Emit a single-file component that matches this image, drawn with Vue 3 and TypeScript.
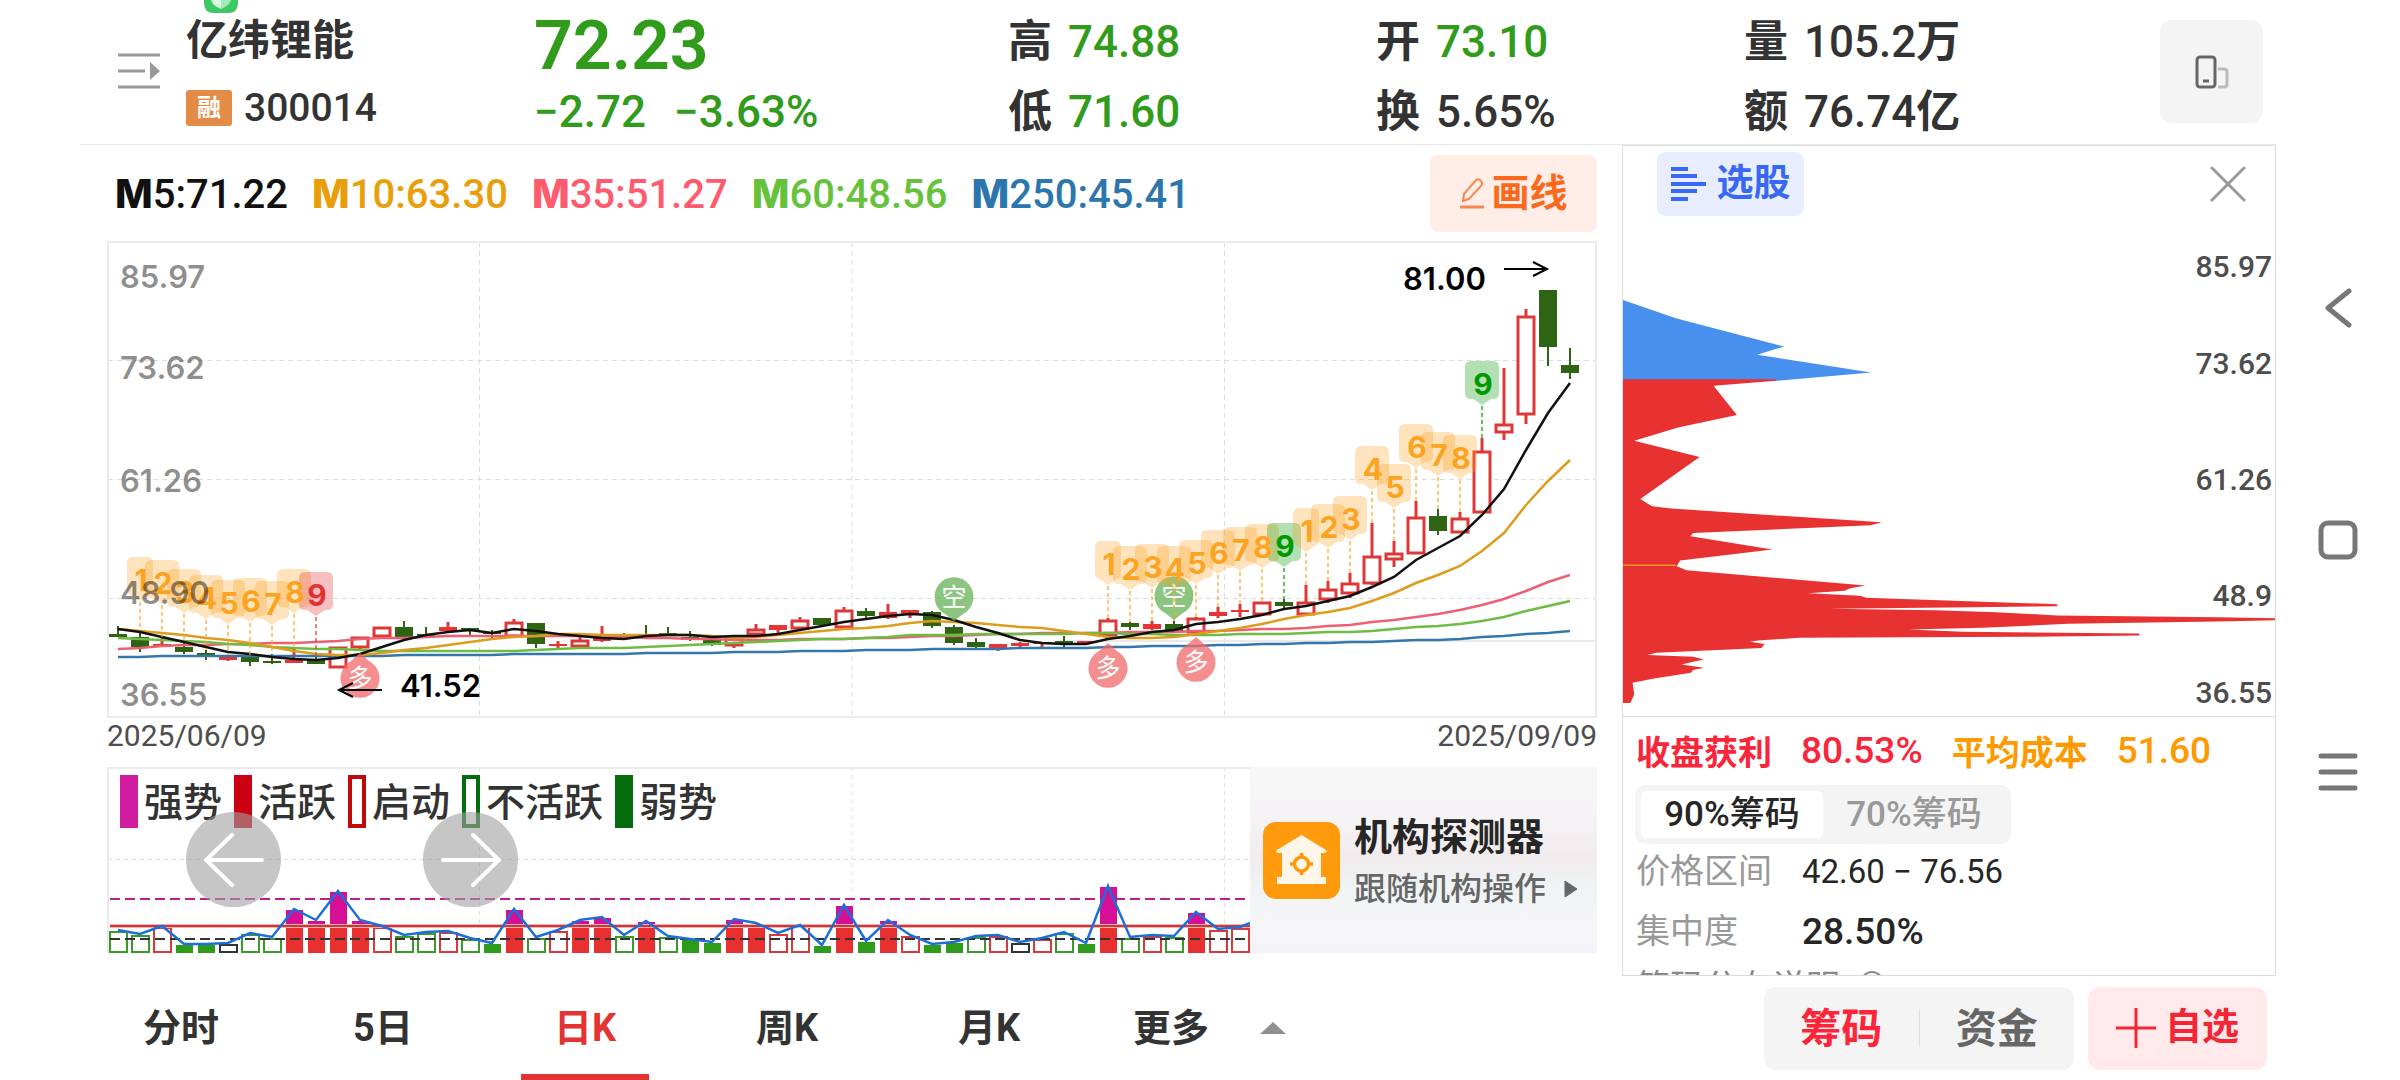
<script setup lang="ts">
import { ref } from 'vue'

type Candle = [kind: 'h' | 'r' | 'g', top: number, bottom: number, high?: number, low?: number]
type BarKind = 'gh' | 'rh' | 'kh' | 'gs' | 'rs'

const STEP = 22
const FIRST = 118
const cx = (i: number): number => FIRST + i * STEP

const averages = [
  { name: '5', value: '71.22', color: '#111111' },
  { name: '10', value: '63.30', color: '#e99f0c' },
  { name: '35', value: '51.27', color: '#ff5a6e' },
  { name: '60', value: '48.56', color: '#66c23a' },
  { name: '250', value: '45.41', color: '#2c76ae' },
]

const quotes = [
  [
    { label: '高', value: '74.88', unit: '', green: true },
    { label: '低', value: '71.60', unit: '', green: true },
  ],
  [
    { label: '开', value: '73.10', unit: '', green: true },
    { label: '换', value: '5.65%', unit: '', green: false },
  ],
  [
    { label: '量', value: '105.2', unit: '万', green: false },
    { label: '额', value: '76.74', unit: '亿', green: false },
  ],
]

// h = hollow rising, r = thin rising, g = falling
const candles: Candle[] = [
  ['g', 634, 637, 626, 637], ['g', 637, 647, 630, 652], ['r', 644, 647, 637, 647], ['g', 647, 652, 640, 654],
  ['g', 653, 655, 650, 660], ['r', 657, 660, 655, 661], ['g', 657, 662, 655, 666], ['g', 661, 663, 654, 664],
  ['r', 660, 663, 648, 663], ['g', 660, 664, 655, 664], ['h', 647, 668], ['h', 637, 648, 637, 649],
  ['h', 627, 637], ['g', 627, 637, 621, 637], ['g', 634, 636, 627, 636], ['r', 627, 631, 622, 633],
  ['g', 628, 630, 628, 637], ['g', 632, 634, 630, 638], ['h', 622, 637, 619, 638], ['g', 623, 644, 623, 648],
  ['r', 644, 646, 641, 648], ['h', 640, 647, 637, 647], ['r', 637, 641, 626, 642], ['g', 634, 637, 633, 637],
  ['g', 634, 636, 625, 636], ['g', 633, 635, 627, 636], ['g', 637, 640, 631, 641], ['g', 640, 645, 638, 646],
  ['h', 636, 646, 636, 648], ['h', 629, 635, 624, 635], ['r', 625, 630, 625, 633], ['h', 620, 629, 617, 629],
  ['g', 618, 625, 618, 627], ['h', 610, 628, 607, 628], ['g', 611, 616, 608, 618], ['r', 612, 618, 604, 619],
  ['r', 610, 614, 610, 618], ['g', 612, 626, 611, 628], ['g', 627, 643, 625, 645], ['g', 642, 647, 638, 648],
  ['r', 644, 648, 644, 651], ['r', 643, 646, 642, 647], ['r', 642, 644, 642, 647], ['g', 641, 643, 636, 648],
  ['r', 641, 643, 641, 643], ['h', 620, 636, 618, 636], ['g', 623, 627, 622, 630], ['r', 624, 629, 621, 630],
  ['g', 624, 631, 621, 633], ['h', 618, 633, 617, 633], ['r', 612, 616, 607, 618], ['r', 610, 612, 604, 617],
  ['h', 602, 615], ['g', 602, 606, 599, 608], ['h', 602, 615, 585, 615], ['h', 589, 600, 581, 603],
  ['h', 583, 594, 573, 598], ['h', 556, 584, 523, 585], ['h', 553, 560, 541, 567], ['h', 517, 554, 501, 554],
  ['g', 516, 531, 509, 535], ['h', 518, 533, 512, 533], ['h', 451, 513, 438, 513], ['h', 424, 433, 368, 440],
  ['h', 316, 415, 309, 424], ['g', 290, 347, 290, 366], ['g', 365, 373, 348, 379],
]

const lines = [
  {
    color: '#3677ab',
    ys: [657, 657, 656, 656, 656, 656, 656, 656, 656, 656, 656, 656, 656, 655, 655, 655, 655, 655, 654, 654, 654, 654,
      654, 654, 653, 653, 653, 653, 652, 652, 652, 651, 651, 651, 650, 650, 650, 649, 649, 649, 649, 648, 648, 648, 648,
      647, 647, 646, 646, 646, 645, 645, 644, 644, 643, 643, 642, 642, 641, 640, 640, 639, 637, 636, 634, 633, 631],
  },
  {
    color: '#ee5f74',
    ys: [649, 648, 646, 645, 645, 644, 644, 643, 643, 642, 641, 639, 638, 638, 637, 636, 636, 636, 636, 636, 636, 636,
      637, 637, 638, 638, 639, 639, 640, 640, 640, 639, 639, 639, 638, 638, 637, 636, 636, 635, 634, 634, 633, 633, 633,
      633, 632, 632, 632, 631, 631, 630, 629, 629, 628, 626, 625, 622, 620, 617, 614, 610, 605, 599, 591, 582, 575],
  },
  {
    color: '#6dbd45',
    ys: [638, 639, 640, 641, 642, 644, 645, 647, 648, 649, 649, 650, 651, 651, 651, 651, 651, 651, 651, 650, 649, 648,
      648, 648, 647, 646, 645, 644, 643, 642, 641, 640, 639, 639, 638, 637, 635, 635, 635, 634, 634, 634, 634, 634, 633,
      633, 634, 634, 635, 635, 635, 634, 634, 634, 633, 632, 632, 631, 629, 627, 626, 624, 621, 617, 611, 606, 601],
  },
  {
    color: '#de9c1d',
    ys: [629, 631, 633, 635, 638, 640, 643, 647, 651, 654, 655, 655, 653, 650, 648, 645, 642, 639, 637, 636, 634, 634,
      635, 635, 635, 635, 635, 636, 638, 637, 635, 633, 631, 629, 628, 626, 623, 621, 622, 623, 625, 627, 628, 631, 634,
      637, 638, 638, 637, 634, 631, 628, 624, 619, 615, 612, 608, 601, 593, 583, 575, 566, 551, 533, 505, 481, 460],
  },
  {
    color: '#111111',
    ys: [629, 632, 637, 642, 647, 652, 654, 657, 659, 660, 658, 654, 647, 640, 635, 632, 630, 633, 629, 631, 634, 636,
      638, 639, 636, 635, 635, 637, 636, 636, 634, 630, 626, 622, 619, 616, 614, 615, 620, 627, 633, 640, 643, 644, 644,
      639, 636, 632, 630, 624, 622, 619, 615, 609, 606, 601, 596, 587, 577, 560, 548, 536, 515, 489, 450, 413, 383],
  },
]
const points = (ys: number[]): string => ys.map((y, i) => `${cx(i)},${y}`).join(' ')

const tdColors = { orange: '#fca321', red: '#e33030', green: '#009900' }
type TdTone = keyof typeof tdColors
const td: { i: number; n: number; y: number; tone: TdTone }[] = [
  ...[557, 560, 569, 575, 580, 578, 581, 569, 572].map((y, k) => ({ i: k + 1, n: k + 1, y, tone: (k === 8 ? 'red' : 'orange') as TdTone })),
  ...[541, 546, 544, 546, 540, 530, 527, 524, 523].map((y, k) => ({ i: k + 45, n: k + 1, y, tone: (k === 8 ? 'green' : 'orange') as TdTone })),
  ...[508, 504, 496, 446, 464, 424, 432, 435, 361].map((y, k) => ({ i: k + 54, n: k + 1, y, tone: (k === 8 ? 'green' : 'orange') as TdTone })),
]
const half = (n: number): number => (n === 1 ? 13 : 17)
const bubble = (n: number, x: number, y: number): string => {
  const w = half(n)
  return `M${x - w + 6} ${y}H${x + w - 6}q6 0 6 6V${y + 32}q0 6 -6 6H${x + 9}L${x} ${y + 44}L${x - 9} ${y + 38}H${x - w + 6}q-6 0 -6 -6V${y + 6}q0 -6 6 -6z`
}

const pins = [
  { x: 360, y: 678, text: '多', up: true },
  { x: 1108, y: 668, text: '多', up: true },
  { x: 1196, y: 662, text: '多', up: true },
  { x: 954, y: 597, text: '空', up: false },
  { x: 1174, y: 596, text: '空', up: false },
]

const axis = [
  { y: 288, text: '85.97' },
  { y: 379, text: '73.62' },
  { y: 492, text: '61.26' },
  { y: 604, text: '48.90' },
  { y: 706, text: '36.55' },
]

const legend = [
  { text: '强势', fill: '#cf1c9e', edge: '#cf1c9e' },
  { text: '活跃', fill: '#cb0013', edge: '#cb0013' },
  { text: '启动', fill: '#ffffff', edge: '#c00a0a' },
  { text: '不活跃', fill: '#ffffff', edge: '#046c0c' },
  { text: '弱势', fill: '#046c0c', edge: '#046c0c' },
]

const bars: [BarKind, number][] = [
  ['gh', 931], ['gh', 935], ['rh', 927], ['gs', 945], ['gs', 945], ['kh', 944], ['gh', 934], ['gh', 938], ['rs', 910],
  ['rs', 921], ['rs', 892], ['rs', 921], ['rh', 927], ['gh', 936], ['gh', 933], ['rh', 932], ['gh', 939], ['gs', 944],
  ['rs', 910], ['gh', 938], ['rh', 931], ['rs', 921], ['rs', 918], ['gh', 936], ['rs', 922], ['gh', 937], ['gs', 940],
  ['gs', 943], ['rs', 920], ['rs', 924], ['rh', 934], ['rh', 926], ['gs', 946], ['rs', 906], ['gs', 942], ['rs', 921],
  ['rh', 936], ['gs', 945], ['gs', 943], ['gh', 937], ['rh', 936], ['kh', 943], ['rh', 939], ['gh', 933], ['gs', 944],
  ['rs', 887], ['gh', 938], ['rh', 936], ['gh', 937], ['rs', 913], ['rh', 930], ['rh', 928],
]
const edge = { gh: '#3a9a2a', rh: '#d83a3a', kh: '#333333', gs: '#2f9b1b', rs: '#e83030' }
const barLine = bars.map(([, y], i) => `${cx(i)},${y - 1}`).join(' ') + ' 1250,923'

const chips = ['85.97', '73.62', '61.26', '48.9', '36.55']

const range = ref(0)
const pane = ref(0)
const tab = ref(2)
const tabs = ['分时', '5日', '日K', '周K', '月K']
</script>

<template>
  <div class="app">
    <div class="stock">
      <header class="head">
        <button class="plain list" aria-label="列表">
          <svg width="42" height="36" viewBox="0 0 42 36" fill="none" stroke="#999" stroke-width="3">
            <path d="M0 2H42M0 18H27M0 34H42" />
            <path d="M32 9L42 18L32 27z" fill="#999" stroke="none" />
          </svg>
        </button>
        <div class="ident">
          <svg class="shield" width="34" height="13" viewBox="0 0 34 13">
            <path d="M0 0H34V3Q34 13 24 13H10Q0 13 0 3z" fill="#3cc964" />
            <path d="M7 0H17V9Q9 6 7 0z" fill="#d9f8e2" />
            <path d="M17 0H27Q25 6 17 9z" fill="#a5e8b9" />
          </svg>
          <h1>亿纬锂能</h1>
          <div class="code"><span class="badge">融</span>300014</div>
        </div>
        <div class="price">
          <strong>72.23</strong>
          <div class="delta"><span>−2.72</span><span>−3.63%</span></div>
        </div>
        <dl v-for="(col, c) in quotes" :key="c" class="quote">
          <div v-for="q in col" :key="q.label">
            <dt>{{ q.label }}</dt>
            <dd :class="{ green: q.green }">{{ q.value }}<b v-if="q.unit">{{ q.unit }}</b></dd>
          </div>
        </dl>
        <button class="rotate" aria-label="竖屏">
          <svg width="34" height="34" viewBox="0 0 34 34" fill="none">
            <rect x="2" y="2" width="18" height="30" rx="3" stroke="#666" stroke-width="3" />
            <path d="M8 26H14" stroke="#666" stroke-width="3" />
            <path d="M23 14H29Q32 14 32 17V29Q32 32 29 32H23" stroke="#bbb" stroke-width="3" />
          </svg>
        </button>
      </header>

      <div class="body">
        <main class="left">
          <div class="ma-row">
            <span v-for="m in averages" :key="m.name" :style="{ color: m.color }"><b>M</b>{{ m.name }}:{{ m.value }}</span>
            <button class="draw">
              <svg width="26" height="31" viewBox="0 0 26 31" fill="none" stroke="#f9864d" stroke-width="2">
                <path d="M4 23L5 16L17 2Q20 0 22 3Q24 5 22 8L10 21z" />
                <path d="M1 29H25" stroke-width="3" />
              </svg>画线
            </button>
          </div>

          <svg class="chart" viewBox="107 241 1490 477" font-family="Inter, 'Noto Sans CJK SC', sans-serif">
            <g stroke="#dddddd" stroke-dasharray="5 4">
              <path d="M108 360.5H1596M108 479.5H1596M108 598.5H1596M479.500 242V717M852 242V717M1224.500 242V717" />
            </g>
            <path d="M1060 641H1596" stroke="#e9e9e9" stroke-width="2" />
            <rect x="108" y="242" width="1488" height="475" fill="none" stroke="#ebebeb" stroke-width="2" />
            <g v-for="(c, i) in candles" :key="'c' + i" :stroke="c[0] === 'g' ? '#2f6414' : '#dc3838'">
              <template v-if="c[0] === 'h'">
                <path :d="`M${cx(i)} ${c[3] ?? c[1]}V${c[1]}M${cx(i)} ${c[2]}V${c[4] ?? c[2]}`" stroke-width="3" />
                <rect :x="cx(i) - 8" :y="c[1] + 1" width="16" :height="c[2] - c[1] - 2" fill="#fff" stroke-width="3" />
              </template>
              <template v-else>
                <path :d="`M${cx(i)} ${c[3]}V${c[4]}`" :stroke-width="c[0] === 'g' ? 2 : 3" />
                <rect :x="cx(i) - 9" :y="c[1]" width="18" :height="c[2] - c[1]" :fill="c[0] === 'g' ? '#2f6414' : '#e83434'" stroke="none" />
              </template>
            </g>
            <polyline v-for="l in lines" :key="l.color" :points="points(l.ys)" :stroke="l.color" fill="none" stroke-width="2.500" />

            <g v-for="p in pins" :key="p.x">
              <g :fill="p.up ? '#f26a6a' : '#66b255'" opacity="0.75">
                <path v-if="p.up" :d="`M${p.x - 9} ${p.y - 17}L${p.x} ${p.y - 25}L${p.x + 9} ${p.y - 17}A19.500 19.500 0 1 1 ${p.x - 9} ${p.y - 17}z`" />
                <path v-else :d="`M${p.x - 9} ${p.y + 17}L${p.x} ${p.y + 24}L${p.x + 9} ${p.y + 17}A19.500 19.500 0 1 0 ${p.x - 9} ${p.y + 17}z`" />
              </g>
              <text :x="p.x" :y="p.y + 9" text-anchor="middle" font-size="25" fill="#fff">{{ p.text }}</text>
            </g>

            <g v-for="(t, k) in td" :key="'t' + k">
              <path :d="bubble(t.n, cx(t.i), t.y)" :fill="tdColors[t.tone]" opacity="0.3" />
              <path :d="`M${cx(t.i)} ${t.y + 45}V${candles[t.i][3] ?? candles[t.i][1]}`" :stroke="tdColors[t.tone]" stroke-width="2" stroke-dasharray="4 3" opacity="0.6" />
            </g>
            <text v-for="(t, k) in td" :key="'n' + k" :x="cx(t.i) + 1" :y="t.y + 34" text-anchor="middle" font-size="30" font-weight="700" :fill="tdColors[t.tone]">{{ t.n }}</text>

            <g font-size="31" font-weight="600">
              <text v-for="a in axis" :key="a.text" x="120" :y="a.y" fill="#000" fill-opacity="0.45">{{ a.text }}</text>
              <text x="400" y="697">41.52</text>
              <text x="1403" y="290">81.00</text>
            </g>
            <path d="M382 690H339M353 683L339 690L353 697M1504 269H1547M1533 262L1547 269L1533 276" fill="none" stroke="#000" stroke-width="2" />
          </svg>
          <div class="dates"><span>2025/06/09</span><span>2025/09/09</span></div>

          <div class="sub">
            <div class="sub-chart">
              <svg viewBox="107 767 1143 186">
                <path d="M108 859.500H1250M479.500 767V924M852 767V924M1224.500 767V924" stroke="#dddddd" stroke-dasharray="4 4" />
                <path d="M108 953V768H1250" fill="none" stroke="#ebebeb" stroke-width="2" />
                <g v-for="([kind, y], i) in bars" :key="i">
                  <template v-if="kind === 'rs'">
                    <rect :x="cx(i) - 8" :y="y" width="17" :height="953 - y" fill="#e83030" />
                    <rect :x="cx(i) - 8" :y="y" width="17" :height="Math.max(0, 926 - y)" fill="#d60f96" />
                  </template>
                  <rect v-else-if="kind === 'gs'" :x="cx(i) - 8" :y="y" width="17" :height="953 - y" fill="#2f9b1b" />
                  <rect v-else :x="cx(i) - 8" :y="y + 1" width="17" :height="951 - y" fill="none" :stroke="edge[kind]" stroke-width="2" />
                </g>
                <path d="M110 899H1250" stroke="#c01c92" stroke-width="2" stroke-dasharray="10 5" />
                <path d="M110 926H1250" stroke="#f6b0b0" stroke-width="4" />
                <path d="M110 926H1250" stroke="#c83a3a" stroke-width="2" />
                <path d="M110 939H1250" stroke="#333" stroke-width="2" stroke-dasharray="10 5" />
                <polyline :points="barLine" fill="none" stroke="#1a6fd8" stroke-width="2.500" />
              </svg>
              <ul class="legend">
                <li v-for="l in legend" :key="l.text"><i :style="{ background: l.fill, borderColor: l.edge }"></i>{{ l.text }}</li>
              </ul>
              <button class="pan back" aria-label="向左">
                <svg width="60" height="60" viewBox="0 0 60 60" fill="none" stroke="#fff" stroke-width="4" stroke-linecap="round"><path d="M58 30H2M28 5L2 30L28 55" /></svg>
              </button>
              <button class="pan next" aria-label="向右">
                <svg width="60" height="60" viewBox="0 0 60 60" fill="none" stroke="#fff" stroke-width="4" stroke-linecap="round"><path d="M2 30H58M32 5L58 30L32 55" /></svg>
              </button>
            </div>
            <a class="banner" href="#">
              <svg width="77" height="77" viewBox="0 0 77 77">
                <rect width="77" height="77" rx="13" fill="#ff9a0c" />
                <path d="M38.500 13L63 28Q65 31 60 31H58V55H63V62H14V55H19V31H16Q12 31 14 28z" fill="#fff6ea" />
                <circle cx="38.500" cy="42" r="7" fill="none" stroke="#ff9a0c" stroke-width="3.500" />
                <path d="M38.500 31V36M38.500 48V53M27 42H32M45 42H50" stroke="#ff9a0c" stroke-width="3.500" />
              </svg>
              <span class="banner-text">
                <strong>机构探测器</strong>
                <span>跟随机构操作<svg width="14" height="18" viewBox="0 0 14 18"><path d="M1 1L13 9L1 17z" fill="#666" stroke="#666" stroke-linejoin="round" /></svg></span>
              </span>
            </a>
          </div>
        </main>

        <section class="panel">
          <div class="panel-head">
            <button class="pick">
              <svg width="35" height="36" viewBox="0 0 35 36" stroke="#3868f4" stroke-width="4"><path d="M0 3H17M0 10H26M0 18H35M0 25H26M0 33H17" /></svg>选股
            </button>
            <button class="plain" aria-label="关闭">
              <svg width="36" height="36" viewBox="0 0 36 36" stroke="#999" stroke-width="3" stroke-linecap="round"><path d="M2 2L34 34M34 2L2 34" /></svg>
            </button>
          </div>
          <div class="dist">
            <svg viewBox="28 0 1506 1430" preserveAspectRatio="none">
              <path d="M28 180L150 235L400 320L338 345L601 398L385 423L28 423z" fill="#4890ed" />
              <path d="M28 418H382V423L237 438L291 526L155 563L54 603L205 652L68 778L95 800L140 807L625 848L600 857L190 880L184 890L373 930L160 963L152 980L175 992L588 1038L553 1046L540 1054L455 1061L575 1069L590 1075L1031 1094V1100L835 1103L505 1108L750 1112L890 1118L1030 1128L1402 1133L1534 1136V1142L1435 1145L1055 1153L860 1165L688 1170L812 1177L1221 1182V1188L957 1192L435 1195L340 1203L322 1207L355 1214L348 1226L262 1231L105 1240L85 1247L190 1252L215 1260L190 1267L163 1275L215 1285L190 1292L185 1300L100 1317L50 1330L54 1365L45 1391H28z" fill="#e83131" />
              <path d="M28 977H150" stroke="#f09a20" stroke-width="4" />
            </svg>
            <span v-for="c in chips" :key="c">{{ c }}</span>
          </div>
          <div class="info">
            <div class="gain"><b class="red">收盘获利</b><span class="red">80.53%</span><b class="amber">平均成本</b><span class="amber">51.60</span></div>
            <div class="seg">
              <button v-for="(s, i) in ['90%筹码', '70%筹码']" :key="s" :class="{ on: range === i }" @click="range = i">{{ s }}</button>
            </div>
            <dl class="facts">
              <div><dt>价格区间</dt><dd>42.60 − 76.56</dd></div>
              <div><dt>集中度</dt><dd class="strong">28.50%</dd></div>
            </dl>
            <div class="more">筹码分布说明<i></i></div>
          </div>
        </section>
      </div>

      <footer class="foot">
        <nav class="tabs">
          <button v-for="(t, i) in tabs" :key="t" :class="{ on: tab === i }" @click="tab = i">{{ t }}</button>
          <button class="extra">更多<svg width="26" height="12" viewBox="0 0 26 12"><path d="M0 12L13 0L26 12z" fill="#909090" /></svg></button>
        </nav>
        <div class="actions">
          <div class="pair">
            <button v-for="(p, i) in ['筹码', '资金']" :key="p" :class="{ on: pane === i }" @click="pane = i">{{ p }}</button>
          </div>
          <button class="add">
            <svg width="40" height="40" viewBox="0 0 40 40" stroke="#f32636" stroke-width="3"><path d="M0 20H40M20 0V40" /></svg>自选
          </button>
        </div>
      </footer>
    </div>

    <aside class="system">
      <button class="plain" aria-label="返回">
        <svg width="40" height="40" viewBox="0 0 40 40" fill="none" stroke="#777" stroke-width="5" stroke-linecap="round" stroke-linejoin="round"><path d="M31 3L10 20L31 37" /></svg>
      </button>
      <button class="plain" aria-label="主页">
        <svg width="40" height="40" viewBox="0 0 40 40" fill="none" stroke="#777" stroke-width="5"><rect x="3" y="3" width="34" height="34" rx="7" /></svg>
      </button>
      <button class="plain" aria-label="任务">
        <svg width="40" height="40" viewBox="0 0 40 40" stroke="#777" stroke-width="5" stroke-linecap="round"><path d="M3 4H37M3 20H37M3 36H37" /></svg>
      </button>
    </aside>
  </div>
</template>

<style>
body {
  margin: 0;
  background: #fff;
}
</style>

<style scoped>
.app {
  display: flex;
  min-height: 100vh;
  padding-left: 80px;
  box-sizing: border-box;
  background: #fff;
  color: #333;
  font-family: Roboto, 'Noto Sans CJK SC', sans-serif;
}
svg {
  display: block;
}
button {
  padding: 0;
  border: 0;
  background: none;
  color: inherit;
  font: inherit;
  cursor: pointer;
}
dl,
dd,
h1,
ul {
  margin: 0;
  padding: 0;
}
.stock {
  flex: 1;
  min-width: 0;
  display: flex;
  flex-direction: column;
}

.head {
  display: grid;
  grid-template-columns: 106px 348fr 474fr 368fr 368fr 416fr 103px;
  height: 144px;
  padding-right: 13px;
  border-bottom: 1px solid #e8e8e8;
}
.list {
  padding: 53px 0 0 38px;
  align-self: start;
}
.ident {
  position: relative;
  padding-top: 10px;
}
.shield {
  position: absolute;
  left: 18px;
  top: 0;
}
.ident h1 {
  font-size: 42px;
  line-height: 62px;
  font-weight: 700;
}
.code {
  display: flex;
  align-items: center;
  gap: 12px;
  height: 72px;
  font-size: 39px;
  font-weight: 500;
}
.badge {
  width: 46px;
  height: 36px;
  border-radius: 3px;
  background: #e38b47;
  color: #fff;
  font-size: 24px;
  line-height: 36px;
  font-weight: 700;
  text-align: center;
}
.price {
  color: #319b1c;
  font-weight: 500;
}
.price strong {
  display: block;
  padding-top: 6px;
  font-size: 68px;
  line-height: 80px;
  font-weight: 600;
}
.delta {
  display: flex;
  gap: 28px;
  font-size: 44px;
  line-height: 52px;
}
.quote {
  padding-top: 7px;
}
.quote div {
  display: flex;
  gap: 16px;
  height: 70px;
  align-items: center;
}
.quote dt {
  font-size: 44px;
  line-height: 70px;
  font-weight: 700;
}
.quote dd {
  font-size: 44px;
  line-height: 70px;
  font-weight: 500;
}
.green {
  color: #319b1c;
}
.rotate {
  display: flex;
  align-items: center;
  justify-content: center;
  width: 103px;
  height: 103px;
  margin-top: 20px;
  border-radius: 12px;
  background: #f4f4f4;
}

.body {
  display: grid;
  grid-template-columns: 1542fr 654fr;
}
.left {
  min-width: 0;
  padding: 0 25px 23px 27px;
}
.ma-row {
  display: flex;
  align-items: center;
  gap: 24px;
  height: 96px;
  padding-left: 8px;
  font-size: 40px;
  font-weight: 500;
}
.ma-row b {
  font-family: Inter, sans-serif;
  font-weight: 800;
}
.draw {
  display: flex;
  align-items: center;
  justify-content: center;
  gap: 6px;
  width: 167px;
  height: 77px;
  margin-left: auto;
  border-radius: 8px;
  background: #ffeee7;
  color: #f96a1f;
  font-size: 38px;
  line-height: 44px;
  font-weight: 700;
}
.chart,
.sub-chart > svg,
.dist svg {
  width: 100%;
}
.dates {
  display: flex;
  justify-content: space-between;
  padding-bottom: 13px;
  color: #4d4d4d;
  font-size: 30px;
  line-height: 36px;
}
.sub {
  display: flex;
}
.sub-chart {
  position: relative;
  flex: 1;
  min-width: 0;
}
.legend {
  position: absolute;
  left: 13px;
  top: 8px;
  display: flex;
  gap: 12px;
  list-style: none;
  font-size: 39px;
  line-height: 57px;
  font-weight: 500;
}
.legend li {
  display: flex;
  gap: 6px;
}
.legend i {
  box-sizing: border-box;
  width: 18px;
  height: 53px;
  border: 4px solid;
}
.pan {
  position: absolute;
  top: 45px;
  display: flex;
  align-items: center;
  justify-content: center;
  width: 95px;
  height: 95px;
  border-radius: 50%;
  background: rgba(160, 160, 160, 0.6);
}
.back {
  left: 79px;
}
.next {
  left: 316px;
}
.banner {
  display: flex;
  align-items: center;
  gap: 14px;
  box-sizing: border-box;
  width: 347px;
  padding-left: 13px;
  background: linear-gradient(#f6f7f7, #f5f2f5 30%, #f1ebed 48%, #eff3f4 64%, #f5f5f8 82%, #f5f3f7);
  color: #666;
  text-decoration: none;
}
.banner-text {
  display: flex;
  flex-direction: column;
  padding-top: 6px;
  font-size: 32px;
  line-height: 52px;
  font-weight: 500;
}
.banner-text strong {
  color: #262626;
  font-size: 38px;
  font-weight: 700;
}
.banner-text span {
  display: flex;
  align-items: center;
  gap: 18px;
}

.panel {
  border: 1px solid #dcdcdc;
  min-width: 0;
}
.panel-head {
  display: flex;
  justify-content: space-between;
  align-items: center;
  height: 64px;
  padding: 6px 29px 24px 34px;
}
.pick {
  display: flex;
  align-items: center;
  justify-content: center;
  gap: 11px;
  width: 147px;
  height: 64px;
  border-radius: 8px;
  background: #e8eeff;
  color: #3868f4;
  font-size: 37px;
  line-height: 44px;
  font-weight: 700;
}
.dist {
  position: relative;
  display: grid;
  grid-template-rows: 97px 116px 116px 97px 36px;
  justify-items: end;
  box-sizing: border-box;
  height: 477px;
  padding: 9px 3px 0;
  border-bottom: 1px solid #dcdcdc;
  color: #4d4d4d;
  font-size: 30px;
  line-height: 36px;
  font-weight: 500;
}
.dist svg {
  position: absolute;
  left: 0;
  top: 0;
  height: 100%;
}
.info {
  padding: 8px 12px 0 13px;
  font-size: 34px;
}
.gain {
  display: flex;
  align-items: center;
  gap: 29px;
  height: 50px;
  font-weight: 500;
}
.gain span {
  font-size: 37px;
}
.red {
  color: #f9253a;
}
.amber {
  color: #ff9900;
}
.seg {
  display: flex;
  box-sizing: border-box;
  width: 376px;
  height: 59px;
  margin: 10px 0 0 -1px;
  padding: 6px;
  border-radius: 10px;
  background: #f4f4f4;
}
.seg button {
  flex: 1;
  border-radius: 6px;
  color: #999;
  font-size: 35px;
  line-height: 47px;
  font-weight: 500;
}
.seg .on {
  background: #fff;
  color: #262626;
}
.facts {
  margin-top: -3px;
}
.facts div {
  display: flex;
  height: 60px;
  align-items: center;
}
.facts dt {
  width: 166px;
  color: #999;
  line-height: 40px;
}
.facts dd {
  color: #262626;
  font-size: 33px;
}
.facts .strong {
  font-weight: 500;
  font-size: 37px;
}
.more {
  display: flex;
  box-sizing: border-box;
  height: 14px;
  padding-top: 4px;
  overflow: hidden;
  color: #888;
  line-height: 44px;
}
.more i {
  box-sizing: border-box;
  width: 24px;
  height: 24px;
  margin: 6px 0 0 20px;
  border: 2px solid #888;
  border-radius: 50%;
}

.foot {
  display: flex;
  justify-content: space-between;
  flex: 1;
  min-height: 103px;
  padding-right: 9px;
}
.tabs {
  display: flex;
  font-size: 38px;
  line-height: 44px;
  font-weight: 700;
}
.tabs button {
  position: relative;
  width: 202px;
}
.tabs .on {
  color: #e33333;
}
.tabs .on::after {
  content: '';
  position: absolute;
  left: 37px;
  right: 37px;
  bottom: 0;
  height: 6px;
  background: #e33333;
}
.tabs .extra {
  display: flex;
  align-items: center;
  gap: 51px;
  padding-left: 43px;
}
.actions {
  display: flex;
  align-items: center;
  gap: 14px;
}
.pair {
  display: flex;
  align-items: center;
  width: 310px;
  height: 83px;
  border-radius: 12px;
  background: #f4f4f4;
  color: #666;
  font-size: 41px;
  font-weight: 700;
}
.pair button {
  flex: 1;
  height: 38px;
  line-height: 40px;
}
.pair button + button {
  border-left: 1px solid #ddd;
}
.pair .on {
  color: #ff2438;
}
.add {
  display: flex;
  align-items: center;
  justify-content: center;
  gap: 9px;
  width: 179px;
  height: 83px;
  border-radius: 12px;
  background: #ffe9ea;
  color: #f32636;
  font-size: 37px;
  line-height: 44px;
  font-weight: 700;
}
.system {
  display: flex;
  flex-direction: column;
  align-items: center;
  justify-content: center;
  gap: 192px;
  width: 124px;
}
</style>
